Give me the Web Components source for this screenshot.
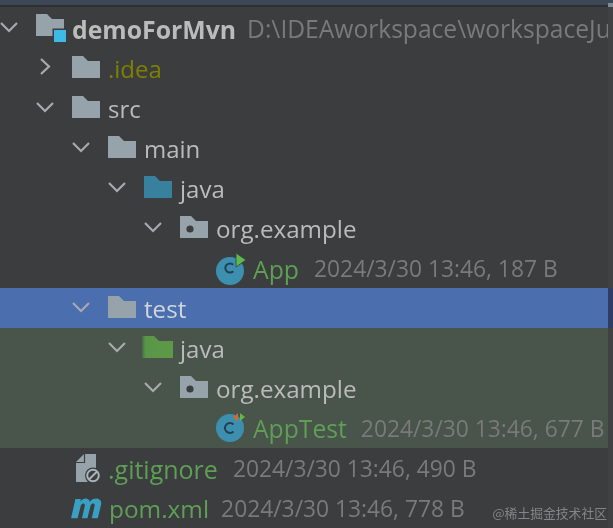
<!DOCTYPE html>
<html><head><meta charset="utf-8">
<style>
html,body{margin:0;padding:0;background:#3c3d3f;overflow:hidden}
body{width:613px;height:528px;font-family:"Open Sans","Noto Sans",sans-serif}
</style></head><body>
<project-tree>
<tree-row depth="0" arrow="down" icon="module" label="demoForMvn" bold size="24.8" meta="D:\IDEAworkspace\workspaceJu" msize="24.6" gap="11"></tree-row>
<tree-row depth="1" arrow="right" icon="folder" label=".idea" color="#808000"></tree-row>
<tree-row depth="1" arrow="down" icon="folder" label="src"></tree-row>
<tree-row depth="2" arrow="down" icon="folder" label="main"></tree-row>
<tree-row depth="3" arrow="down" icon="src" label="java"></tree-row>
<tree-row depth="4" arrow="down" icon="pkg" label="org.example" size="24.2"></tree-row>
<tree-row depth="5" arrow="none" icon="app" label="App" color="#5e9e55" size="24.8" meta="2024/3/30 13:46, 187 B"></tree-row>
<tree-row depth="2" arrow="down" icon="folder" label="test" state="selected" size="24.2"></tree-row>
<tree-row depth="3" arrow="down" icon="testsrc" label="java" state="test"></tree-row>
<tree-row depth="4" arrow="down" icon="pkg" label="org.example" state="test" size="24.2"></tree-row>
<tree-row depth="5" arrow="none" icon="apptest" label="AppTest" color="#5e9e55" size="24.7" meta="2024/3/30 13:46, 677 B" state="test" gap="14"></tree-row>
<tree-row depth="1" arrow="none" icon="ignore" label=".gitignore" color="#5e9e55" size="25" meta="2024/3/30 13:46, 490 B"></tree-row>
<tree-row depth="1" arrow="none" icon="pom" label="pom.xml" color="#5e9e55" size="24.4" meta="2024/3/30 13:46, 778 B" gap="12"></tree-row>
</project-tree>
<water-mark>@稀土掘金技术社区</water-mark>
<script>
const FOLDER='M0 0H11L16 5H28V22H0Z';
const G='#97a3ab';
const BG='#3c3d3f';
const CIRCLE=(cy,cc,r)=>`<circle cx="14" cy="${cy}" r="14" fill="#3d8fb0"/><path d="M${14+r*.7} ${cc-r*.7}a${r} ${r} 0 1 0 0 ${r*1.4}" fill="none" stroke="#23414f" stroke-width="2"/>`;
const ICONS={
 folder:`<svg width="28" height="22" viewBox="0 0 28 22"><path d="${FOLDER}" fill="${G}"/></svg>`,
 src:`<svg width="28" height="22" viewBox="0 0 28 22"><path d="${FOLDER}" fill="#37819f"/></svg>`,
 testsrc:`<svg style="margin-left:-2px" width="32" height="24" viewBox="0 0 32 24"><defs><linearGradient id="tg" x1="0" x2="1"><stop offset="0" stop-color="#49694a"/><stop offset=".12" stop-color="#5a9648"/><stop offset="1" stop-color="#5c9a46"/></linearGradient></defs><path d="M0 1H12L17 6H31V23H0Z" fill="url(#tg)"/></svg>`,
 pkg:`<svg width="28" height="22" viewBox="0 0 28 22"><path d="${FOLDER}" fill="${G}"/><circle cx="10" cy="13" r="3.6" fill="${BG}"/></svg>`,
 module:`<svg width="32" height="30" viewBox="0 -2 32 30"><path d="${FOLDER}" fill="${G}"/><rect x="16.5" y="14.5" width="14" height="14" fill="${BG}"/><rect x="18" y="16" width="12" height="12" fill="#3dbbe6"/></svg>`,
 app:`<svg width="32" height="36" viewBox="0 0 32 36">${CIRCLE(22,19,4.6)}<path d="M20 4L30 11L20 18Z" fill="#5fb84a" stroke="${BG}" stroke-width=".8"/></svg>`,
 apptest:`<svg width="32" height="36" viewBox="0 0 32 36">${CIRCLE(19,19,5)}<path d="M22 4L17 9L22 12Z" fill="#d9662b"/><path d="M24 4L29 8L24 12Z" fill="#5fb84a"/></svg>`,
 ignore:`<svg width="30" height="32" viewBox="0 0 30 32"><path d="M4 11L12 3H24V31H4Z" fill="${G}"/><path d="M4 11.5H12.5V3" fill="none" stroke="${BG}" stroke-width="1.2"/><circle cx="21" cy="24.5" r="8" fill="${BG}"/><circle cx="21" cy="24.5" r="5.8" fill="none" stroke="#a9b3ba" stroke-width="2"/><path d="M17 28.5L25 20.5" stroke="#a9b3ba" stroke-width="2"/></svg>`,
 pom:`<svg width="32" height="24" viewBox="0 0 32 24" style="overflow:visible"><path transform="translate(-4.2,1) scale(1.09,.97)" d="M3 23L7 3H12L11.4 6C13 3 16.5 2 18 3C19.5 3.6 20 5 20.2 6C22 3 26 2 28 3C30.5 4 31 6 30.5 9L27.5 23H22L24.6 10C25 7.5 22.5 7 21 9.5L18 23H13L15.6 10C16 7.5 13.5 7 12 9.5L9 23Z" fill="#39a0c4"/></svg>`
};
class ProjectTree extends HTMLElement{
 constructor(){super();this.attachShadow({mode:'open'}).innerHTML=`<style>
 :host{display:block;position:relative;height:528px;box-sizing:border-box;background:${BG}}
 .top{height:5px;background:#3d4856}.line{height:2px;background:#2e2f31}
 .rows{display:flex;flex-direction:column;padding-top:1px}
 .edge{position:absolute;top:7px;right:0;bottom:0;width:5px;background:linear-gradient(#404143 0 281px,#2f3c63 281px 321px,#404143 321px)}
 .mark{position:absolute;top:3px;right:0;width:5px;height:4px;background:#7f8a96}
 </style><div class="top"></div><div class="line"></div><div class="rows"><slot></slot></div><div class="edge"></div><div class="mark"></div>`}
}
class TreeRow extends HTMLElement{
 connectedCallback(){
  const a=n=>this.getAttribute(n);
  const d=+a('depth'),arrow=a('arrow'),icon=a('icon'),st=a('state')||'';
  const x=d*36;
  const bg=st==='selected'?'#4b6eaf':st==='test'?'#49544a':'transparent';
  const chev=arrow==='down'?'<path d="M1 1L9 9L17 1"/>':arrow==='right'?'<path d="M1 1L9 8.5L1 16"/>':'';
  const boxW={pom:37,app:37,apptest:37}[icon]||36;
  const w=arrow==='right'?11:18,h=arrow==='right'?18:11;
  this.attachShadow({mode:'open'}).innerHTML=`<style>
  :host{display:block;height:40px}
  .row{height:40px;box-sizing:border-box;padding-top:2px;display:flex;align-items:center;background:${bg};padding-left:${x}px;white-space:nowrap;overflow:hidden}
  .chev{flex:0 0 36px;display:flex;justify-content:center;transform:translateX(-9px)}
  .chev svg{fill:none;stroke:#a8aaac;stroke-width:2.2;margin-bottom:4px}
  .ic{flex:0 0 ${boxW}px;display:flex;align-items:center;height:38px}
  .ic svg{margin-bottom:4px}
  .lb,.mt{filter:blur(.3px)}
  .lb{font-size:${a('size')||24}px;line-height:38px;color:${a('color')||'#bbbbbb'};font-weight:${this.hasAttribute('bold')?700:400};${st==='selected'?'color:#cfd6de;':''}}
  .mt{font-size:${a('msize')||22.8}px;line-height:38px;color:#7a7a7a;margin-left:${a('gap')||15}px}
  </style><div class="row"><span class="chev"><svg width="${w}" height="${h}" viewBox="0 0 ${w} ${h}">${chev}</svg></span><span class="ic">${ICONS[icon]}</span><span class="lb">${a('label')}</span>${a('meta')?`<span class="mt">${a('meta')}</span>`:''}</div>`;
 }
}
class WaterMark extends HTMLElement{
 constructor(){super();this.attachShadow({mode:'open'}).innerHTML=`<style>
 :host{position:absolute;right:6px;bottom:6px;font:12.8px "Noto Sans CJK SC",sans-serif;color:#838587;filter:blur(.3px)}
 </style><slot></slot>`}
}
customElements.define('project-tree',ProjectTree);
customElements.define('tree-row',TreeRow);
customElements.define('water-mark',WaterMark);
</script>
</body></html>
